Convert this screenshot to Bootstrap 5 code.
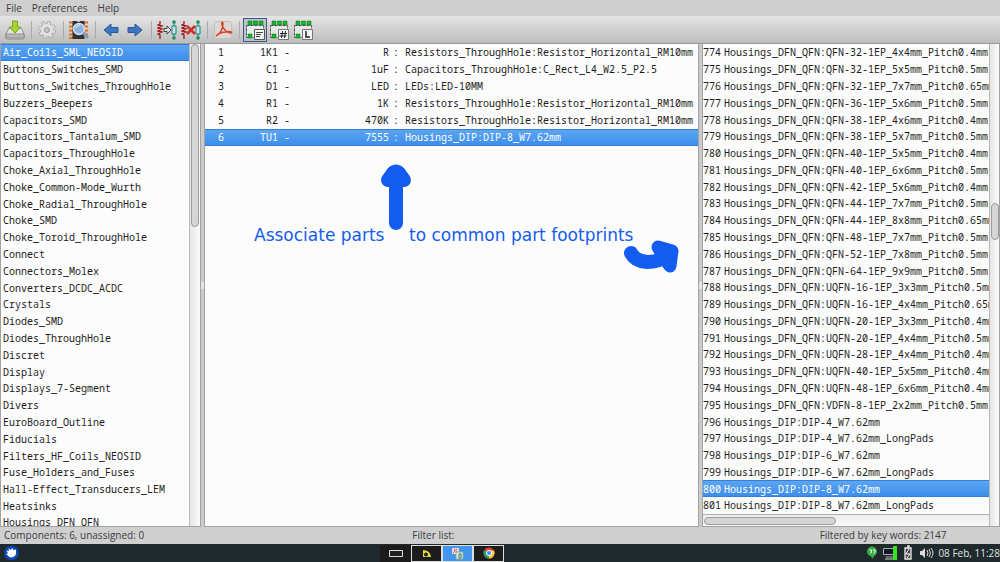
<!DOCTYPE html>
<html lang="en">
<head>
<meta charset="utf-8">
<meta name="viewport" content="width=device-width, initial-scale=1">
<title>CvPcb</title>
<link href="https://cdn.jsdelivr.net/npm/bootstrap@5.3.0/dist/css/bootstrap.min.css" rel="stylesheet">
<script src="https://cdn.jsdelivr.net/npm/bootstrap@5.3.0/dist/js/bootstrap.bundle.min.js" defer></script>
<style>
body{font-family:"Open Sans","Noto Sans",sans-serif;font-size:10px;line-height:15px;color:#3c3c3c;background:#cfcfcf}
a.menu-link{color:#3c3c3c;text-decoration:none}
.menu-strip{height:16px;padding-left:6px;gap:10px}
.tool-strip{height:28px;padding-left:3px;background:linear-gradient(#e4e4e4,#bdbdbd);border-bottom:1px solid #999}
.tool{width:24px;height:24px;padding:0;border:1px solid transparent;background:none;display:flex;align-items:center;justify-content:center}
.tool.on{border-color:#3d5a85;background:#bcc3cd}
.tool svg{width:20px;height:20px;flex:none}
.gap-line{width:8px;height:18px;background:linear-gradient(#aaa,#aaa) center/1px 100% no-repeat}
.mono{font-family:"Noto Sans Mono","DejaVu Sans Mono",monospace;font-size:10px;line-height:16px;color:#1c1c1c;white-space:pre}
.pane{background:#fcfcfc;border:1px solid #a2a2a2;border-top:0;min-height:0}
.side-left{width:201px}
.side-left .rows li{padding-left:2px}
.side-right{width:298px}
.splitter{width:3px;flex:none;background:#cacaca linear-gradient(#e4e4e4,#e4e4e4) center/3px 7px no-repeat}
.rows{list-style:none;margin:0;padding:0;overflow:hidden;min-width:0;min-height:0}
.rows li{flex:1 1 0;min-height:0;display:flex;align-items:center;overflow:hidden}
.rows li.cut{flex-grow:.7;align-items:flex-start}
.rows b{font-weight:400;width:21px;flex:none}
.picked,.picked td{color:#fff}
.picked{background:linear-gradient(#5fa6f3,#3a8deb);box-shadow:inset 0 1px #2f7fdb,inset 0 -1px #2f7fdb}
.parts{width:100%;border-collapse:collapse;table-layout:fixed}
.parts td{padding-top:0;padding-bottom:0;padding-right:0;height:17px;line-height:16px;vertical-align:top}
.track{width:11px;border-left:1px solid #b8b8b8;background:linear-gradient(90deg,#e6e6e6,#fafafa);flex:none}
.side-right .track{width:10px}
.thumb{display:block;border:1px solid #9c9c9c;border-radius:4px;background:#d6d6d6}
.track .thumb{width:8px;margin:0 1px}
.track-h{height:12px;border-top:1px solid #b0b0b0;background:linear-gradient(#eee,#fafafa)}
.track-h .thumb{height:8px;width:46%;margin:2px 0 0 1px}
.note{left:49px;top:120px;font-family:"DejaVu Sans",sans-serif;font-size:17px}
.note svg{display:block;width:440px;height:112px}
.note text{fill:#145cf0}
.status-strip{height:17px}
.filter-cell{padding-left:79px}
.count-cell{padding-left:153px}
.task-strip{height:18px;background:#20292b;color:#dfe3e4}
.task-start{flex:0 0 38%}
.task{width:31px;height:17px;padding:0;background:#1c1c1c;border:1px solid #ddd;display:flex;align-items:center;justify-content:center}
.task.flat{border-color:#1c1c1c}
.task.on{background:#4296ee}
.bare{padding:0;border:0;background:none;display:flex}
</style>
</head>
<body class="vh-100 d-flex flex-column overflow-hidden">
<nav class="menu-strip d-flex align-items-center" aria-label="Menu">
<a class="menu-link" href="#">File</a><a class="menu-link" href="#">Preferences</a><a class="menu-link" href="#">Help</a>
</nav>
<div class="tool-strip d-flex align-items-center flex-shrink-0" role="toolbar">
<button class="tool" aria-label="Save"><svg viewBox="0 0 20 20"><path d="M4 8h12l3 6v4q0 1-1 1H2q-1 0-1-1v-4z" fill="#e6e6e6" stroke="#8d8d8d"/><path d="M1 14h18v4H1z" fill="#b9b9b9" stroke="#8d8d8d"/><path d="M7.500 1h5v6h3.500l-6 6-6-6h3.500z" fill="#a5d336" stroke="#7aa61d"/></svg></button>
<span class="gap-line"></span>
<button class="tool" aria-label="Options"><svg viewBox="0 0 20 20"><circle cx="10" cy="10" r="7" fill="none" stroke="#a2a2a2" stroke-width="4" stroke-dasharray="3.300 2.200"/><circle cx="10" cy="10" r="6.500" fill="#e2e2e2" stroke="#a2a2a2" stroke-width=".8"/><circle cx="10" cy="10" r="7" fill="none" stroke="#e2e2e2" stroke-width="2.500" stroke-dasharray="2.300 3.200" stroke-dashoffset="-.5"/><circle cx="10" cy="10" r="2.500" fill="#c4c4c4" stroke="#999"/></svg></button>
<span class="gap-line"></span>
<button class="tool" aria-label="View footprint"><svg viewBox="0 0 20 20"><path d="M0 2.500h4M0 6.500h4M0 10.500h4M0 14.500h4M0 18h4M15 2.500h4M15 6.500h4M15 10.500h4M15 14.500h4" stroke="#e2701f" stroke-width="2"/><path d="M3.500 1h4q2 2 4 0h4v18h-12z" fill="#333"/><circle cx="10" cy="9" r="5.500" fill="#8db4df" stroke="#d6e0ea" stroke-width="1.500"/><path d="M7 8q1-3 4-3" stroke="#e5f0fb" fill="none"/><path d="m14 13 5 5" stroke="#7b9cc4" stroke-width="2.500"/></svg></button>
<span class="gap-line"></span>
<button class="tool" aria-label="Previous"><svg viewBox="0 0 20 20"><path d="m3 10 7-6v3.500h7v5h-7V16z" fill="#3c77bd" stroke="#28599a"/></svg></button>
<button class="tool" aria-label="Next"><svg viewBox="0 0 20 20"><path d="m17 10-7-6v3.500H3v5h7V16z" fill="#3c77bd" stroke="#28599a"/></svg></button>
<span class="gap-line"></span>
<button class="tool" aria-label="Associate automatically"><svg viewBox="0 0 20 20"><path d="M3 1v3l-2 1 4 1-4 2 4 1-4 2 4 1-4 2 2 1v4" fill="none" stroke="#a01818" stroke-width="1.300"/><path d="M7 8.500h3V6l4 4-4 4v-2.500H7z" fill="#ddd" stroke="#444"/><path d="M17 1v18" stroke="#0d8382"/><path d="M15 6h4v8h-4z" fill="#cfe3e2" stroke="#0d8382"/><circle cx="17" cy="2" r="1.800" fill="#169151"/><circle cx="17" cy="18" r="1.800" fill="#169151"/></svg></button>
<button class="tool" aria-label="Delete associations"><svg viewBox="0 0 20 20"><path d="M3 1v3l-2 1 4 1-4 2 4 1-4 2 4 1-4 2 2 1v4" fill="none" stroke="#a01818" stroke-width="1.300"/><path d="M17 1v18" stroke="#0d8382"/><path d="M15 6h4v8h-4z" fill="#cfe3e2" stroke="#0d8382"/><circle cx="17" cy="2" r="1.800" fill="#169151"/><circle cx="17" cy="18" r="1.800" fill="#169151"/><path d="m6 6 8 8m0-8-8 8" stroke="#d52a2a" stroke-width="2.500"/></svg></button>
<span class="gap-line"></span>
<button class="tool" aria-label="Documentation"><svg viewBox="0 0 20 20"><rect x="1.500" y="1.500" width="17" height="17" rx="2" fill="#ddd8d3" stroke="#c5c0bb"/><path d="M3 16c4-2 7-7 7-12 0-3-2-2-1 1 1 4 5 8 9 8 2-1-1-2-5-1-4 0-8 2-10 4z" fill="none" stroke="#d5452c" stroke-width="1.500"/></svg></button>
<span class="gap-line"></span>
<button class="tool on" aria-label="Filter by keywords"><svg viewBox="0 0 20 20"><path d="M1.500 5.500h17v12h-17z" fill="#e7ebe9" stroke="#555" stroke-dasharray="3 1"/><path d="M3 1h4v4H3zm5.500 0h4v4h-4zM14 1h4v4h-4zM3 14h4v4H3z" fill="#0ebd27" stroke="#145c20" stroke-width=".5"/><path d="M9.500 9.500h10v10h-10z" fill="#f5f5f5" stroke="#555"/><path d="M11 12.500h7M11 14.500h5M11 16.500h4" stroke="#444"/></svg></button>
<button class="tool" aria-label="Filter by pin count"><svg viewBox="0 0 20 20"><path d="M1.500 5.500h17v12h-17z" fill="#e7e7e7" stroke="#555" stroke-dasharray="3 1"/><path d="M3 1h4v4H3zm5.500 0h4v4h-4zM14 1h4v4h-4zM3 14h4v4H3z" fill="#0ebd27" stroke="#145c20" stroke-width=".5"/><path d="M9.500 9.500h10v10h-10z" fill="#f5f5f5" stroke="#777"/><path d="m13.500 11-1 7m4-7-1 7M11 13.500h7m-7.500 2.500h7" stroke="#222"/></svg></button>
<button class="tool" aria-label="Filter by library"><svg viewBox="0 0 20 20"><path d="M1.500 5.500h17v12h-17z" fill="#e7e7e7" stroke="#555" stroke-dasharray="3 1"/><path d="M3 1h4v4H3zm5.500 0h4v4h-4zM14 1h4v4h-4zM3 14h4v4H3z" fill="#0ebd27" stroke="#145c20" stroke-width=".5"/><path d="M9.500 9.500h10v10h-10z" fill="#f5f5f5" stroke="#777"/><path d="M13 11v6h4" fill="none" stroke="#222" stroke-width="1.500"/></svg></button>
</div>
<main class="d-flex flex-grow-1 overflow-hidden">
<section class="pane side-left d-flex flex-shrink-0" aria-label="Libraries">
<ul class="rows mono d-flex flex-column flex-grow-1">
<li class="picked">Air_Coils_SML_NEOSID</li><li>Buttons_Switches_SMD</li><li>Buttons_Switches_ThroughHole</li><li>Buzzers_Beepers</li><li>Capacitors_SMD</li><li>Capacitors_Tantalum_SMD</li><li>Capacitors_ThroughHole</li><li>Choke_Axial_ThroughHole</li><li>Choke_Common-Mode_Wurth</li><li>Choke_Radial_ThroughHole</li><li>Choke_SMD</li><li>Choke_Toroid_ThroughHole</li><li>Connect</li><li>Connectors_Molex</li><li>Converters_DCDC_ACDC</li><li>Crystals</li><li>Diodes_SMD</li><li>Diodes_ThroughHole</li><li>Discret</li><li>Display</li><li>Displays_7-Segment</li><li>Divers</li><li>EuroBoard_Outline</li><li>Fiducials</li><li>Filters_HF_Coils_NEOSID</li><li>Fuse_Holders_and_Fuses</li><li>Hall-Effect_Transducers_LEM</li><li>Heatsinks</li><li class="cut">Housings_DFN_QFN</li>
</ul>
<div class="track d-flex flex-column"><span class="thumb h-auto" style="flex:0 0 38%"></span></div>
</section>
<div class="splitter"></div>
<section class="pane flex-grow-1 position-relative overflow-hidden" aria-label="Components">
<table class="parts mono">
<colgroup><col style="width:19px"><col style="width:54px"><col style="width:12px"><col style="width:99px"><col style="width:15px"><col></colgroup>
<tbody>
<tr><td class="text-end">1</td><td class="text-end">1K1</td><td class="text-end">-</td><td class="text-end">R</td><td class="ps-1">:</td><td>Resistors_ThroughHole:Resistor_Horizontal_RM10mm</td></tr>
<tr><td class="text-end">2</td><td class="text-end">C1</td><td class="text-end">-</td><td class="text-end">1uF</td><td class="ps-1">:</td><td>Capacitors_ThroughHole:C_Rect_L4_W2.5_P2.5</td></tr>
<tr><td class="text-end">3</td><td class="text-end">D1</td><td class="text-end">-</td><td class="text-end">LED</td><td class="ps-1">:</td><td>LEDs:LED-10MM</td></tr>
<tr><td class="text-end">4</td><td class="text-end">R1</td><td class="text-end">-</td><td class="text-end">1K</td><td class="ps-1">:</td><td>Resistors_ThroughHole:Resistor_Horizontal_RM10mm</td></tr>
<tr><td class="text-end">5</td><td class="text-end">R2</td><td class="text-end">-</td><td class="text-end">470K</td><td class="ps-1">:</td><td>Resistors_ThroughHole:Resistor_Horizontal_RM10mm</td></tr>
<tr class="picked"><td class="text-end">6</td><td class="text-end">TU1</td><td class="text-end">-</td><td class="text-end">7555</td><td class="ps-1">:</td><td>Housings_DIP:DIP-8_W7.62mm</td></tr>
</tbody></table>
<div class="note position-absolute"><svg viewBox="0 0 440 112"><g fill="#145cf0" stroke="#145cf0" stroke-linecap="round" stroke-linejoin="round"><path d="M142 59V12" stroke-width="14"/><path d="m134 16 5-7q3-3 6 0l5 7z" stroke-width="14"/><path d="M377 89q4 8 16 9 12 0 20-6" fill="none" stroke-width="14"/><path d="m404 83 14 4-2 15-7-10z" stroke-width="13"/></g><text x="0" y="77">Associate parts</text><text x="155" y="77">to common part footprints</text></svg></div>
</section>
<div class="splitter"></div>
<section class="pane side-right d-flex flex-shrink-0" aria-label="Footprints">
<div class="d-flex flex-column flex-grow-1 overflow-hidden">
<ul class="rows mono d-flex flex-column flex-grow-1">
<li><b>774</b>Housings_DFN_QFN:QFN-32-1EP_4x4mm_Pitch0.4mm</li><li><b>775</b>Housings_DFN_QFN:QFN-32-1EP_5x5mm_Pitch0.5mm</li><li><b>776</b>Housings_DFN_QFN:QFN-32-1EP_7x7mm_Pitch0.65mm</li><li><b>777</b>Housings_DFN_QFN:QFN-36-1EP_5x6mm_Pitch0.5mm</li><li><b>778</b>Housings_DFN_QFN:QFN-38-1EP_4x6mm_Pitch0.4mm</li><li><b>779</b>Housings_DFN_QFN:QFN-38-1EP_5x7mm_Pitch0.5mm</li><li><b>780</b>Housings_DFN_QFN:QFN-40-1EP_5x5mm_Pitch0.4mm</li><li><b>781</b>Housings_DFN_QFN:QFN-40-1EP_6x6mm_Pitch0.5mm</li><li><b>782</b>Housings_DFN_QFN:QFN-42-1EP_5x6mm_Pitch0.4mm</li><li><b>783</b>Housings_DFN_QFN:QFN-44-1EP_7x7mm_Pitch0.5mm</li><li><b>784</b>Housings_DFN_QFN:QFN-44-1EP_8x8mm_Pitch0.65mm</li><li><b>785</b>Housings_DFN_QFN:QFN-48-1EP_7x7mm_Pitch0.5mm</li><li><b>786</b>Housings_DFN_QFN:QFN-52-1EP_7x8mm_Pitch0.5mm</li><li><b>787</b>Housings_DFN_QFN:QFN-64-1EP_9x9mm_Pitch0.5mm</li><li><b>788</b>Housings_DFN_QFN:UQFN-16-1EP_3x3mm_Pitch0.5mm</li><li><b>789</b>Housings_DFN_QFN:UQFN-16-1EP_4x4mm_Pitch0.65mm</li><li><b>790</b>Housings_DFN_QFN:UQFN-20-1EP_3x3mm_Pitch0.4mm</li><li><b>791</b>Housings_DFN_QFN:UQFN-20-1EP_4x4mm_Pitch0.5mm</li><li><b>792</b>Housings_DFN_QFN:UQFN-28-1EP_4x4mm_Pitch0.4mm</li><li><b>793</b>Housings_DFN_QFN:UQFN-40-1EP_5x5mm_Pitch0.4mm</li><li><b>794</b>Housings_DFN_QFN:UQFN-48-1EP_6x6mm_Pitch0.4mm</li><li><b>795</b>Housings_DFN_QFN:VDFN-8-1EP_2x2mm_Pitch0.5mm</li><li><b>796</b>Housings_DIP:DIP-4_W7.62mm</li><li><b>797</b>Housings_DIP:DIP-4_W7.62mm_LongPads</li><li><b>798</b>Housings_DIP:DIP-6_W7.62mm</li><li><b>799</b>Housings_DIP:DIP-6_W7.62mm_LongPads</li><li class="picked"><b>800</b>Housings_DIP:DIP-8_W7.62mm</li><li><b>801</b>Housings_DIP:DIP-8_W7.62mm_LongPads</li>
</ul>
<div class="track-h flex-shrink-0"><span class="thumb"></span></div>
</div>
<div class="track d-flex flex-column"><span style="flex:0 0 33%"></span><span class="thumb" style="flex:0 0 37px"></span></div>
</section>
</main>
<footer class="flex-shrink-0">
<div class="status-strip row g-0 align-items-center"><div class="col-4 ps-1">Components: 6, unassigned: 0</div><div class="col-4 filter-cell">Filter list:</div><div class="col-4 count-cell">Filtered by key words: 2147</div></div>
<div class="task-strip d-flex align-items-center">
<div class="task-start d-flex"><button class="bare ps-1" aria-label="Applications"><svg width="15" height="16" viewBox="0 0 15 16"><circle cx="7.500" cy="8" r="7.300" fill="#0b49b5"/><path d="M2.500 5.500 5 6l-.5-2.500L7 5l1-2 1.500 2 2.500-.5v3q0 4.500-5 5-2 0-3-2L2 9l2-.5z" fill="#fff"/></svg></button></div>
<button class="task flat" aria-label="Show desktop"><svg width="14" height="7"><path d="M.5.500h13v6H.5z" fill="#222" stroke="#ddd"/></svg></button>
<button class="task" aria-label="Schematic"><svg width="12" height="10" viewBox="0 0 12 10"><path d="M2 9V2q7 0 8 7z" fill="#ead83b"/><circle cx="5" cy="6.500" r="2" fill="#222"/></svg></button>
<button class="task on" aria-label="CvPcb"><svg width="13" height="13" viewBox="0 0 13 13"><path d="M1 1h7v6H1z" fill="#f0d7d7"/><path d="m2 6 4-4M3 2l3 3" stroke="#c55"/><path d="M5 5h7v7H5z" fill="#e0eee3" stroke="#8aa"/><path d="M8 7h2v4H8z" fill="#fff" stroke="#2b7b4c"/></svg></button>
<button class="task" aria-label="Browser"><svg width="12" height="12" viewBox="0 0 12 12"><circle cx="6" cy="6" r="5.500" fill="#db4437"/><path d="M6 6 1.200 3.300A5.500 5.500 0 0 0 6 11.500z" fill="#1da462"/><path d="M6 6h5.500A5.500 5.500 0 0 1 6 11.500z" fill="#ffcd40"/><path d="M6 3.500h5q1 2 .5 3L6 6z" fill="#ffcd40"/><circle cx="6" cy="6" r="2.500" fill="#4285f4" stroke="#fff"/></svg></button>
<div class="col d-flex align-items-center justify-content-end">
<svg width="67" height="16" viewBox="0 0 67 16" role="img" aria-label="Status icons"><circle cx="5" cy="6.500" r="5" fill="#38ad45"/><path d="M4 10h4l-3 4z" fill="#38ad45"/><path d="M2.500 5h2v2l-1 1.500M6 5h2v2L7 8.500" fill="none" stroke="#fff"/><path d="M16.500 3.500h10v6h-10zM19 12h7" fill="#14182c" stroke="#a5acb2"/><path d="M18 14h10" stroke="#ccc"/><path d="M26 1h4v14h-4z" fill="#38e21c"/><path d="M38 3h6v11h-6zM40 1h2v2" fill="#444" stroke="#eee" stroke-width="1.300"/><path d="m42 4-3 5h4l-3 4" fill="none" stroke="#fff"/><path d="M53 6h2l3-3v10l-3-3h-2z" fill="#ddd"/><path d="M60 5q2 3 0 6M62 4q3 4 0 8M64 3q4 5 0 10" stroke="#ddd" fill="none"/></svg>
<span class="ps-1 text-nowrap">08 Feb, 11:28</span></div>
</div>
</footer>
</body>
</html>
